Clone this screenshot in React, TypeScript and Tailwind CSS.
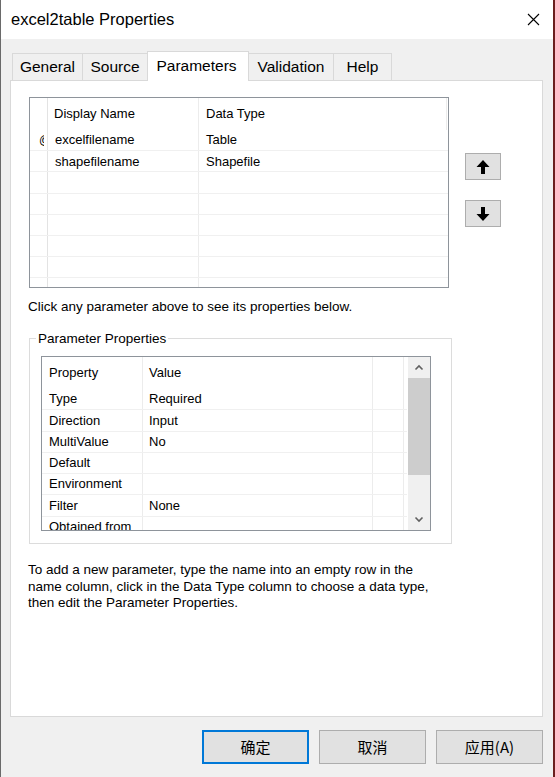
import React from 'react';

const ui = { fontFamily: '"Liberation Sans", Arial, sans-serif' };
const cjk = { fontFamily: '"Noto Sans CJK SC", "Liberation Sans", sans-serif' };

const tabs = [
  { label: 'General', w: 'w-[71px]' },
  { label: 'Source', w: 'w-[66px]' },
  { label: 'Parameters', w: 'w-[102px]', active: true },
  { label: 'Validation', w: 'w-[86px]' },
  { label: 'Help', w: 'w-[59px]' },
];

const params = [
  { name: 'excelfilename', type: 'Table', mark: true },
  { name: 'shapefilename', type: 'Shapefile' },
  { name: '', type: '' },
  { name: '', type: '' },
  { name: '', type: '' },
  { name: '', type: '' },
  { name: '', type: '' },
  { name: '', type: '' },
];

const props = [
  ['Type', 'Required'],
  ['Direction', 'Input'],
  ['MultiValue', 'No'],
  ['Default', ''],
  ['Environment', ''],
  ['Filter', 'None'],
  ['Obtained from', ''],
];

function ArrowButton({ down }: { down?: boolean }) {
  return (
    <button className="w-[36px] h-[27px] bg-[#e1e1e1] border border-[#adadad] flex items-center justify-center">
      <svg width="14" height="16" viewBox="0 0 14 16" className={down ? 'rotate-180' : ''}>
        <polygon points="7,1 13.5,8 9,8 9,15 5,15 5,8 0.5,8" fill="#000" />
      </svg>
    </button>
  );
}

function Chevron({ down }: { down?: boolean }) {
  return (
    <svg width="10" height="7" viewBox="0 0 10 7">
      <polyline
        points={down ? '1.5,1.5 5,5 8.5,1.5' : '1.5,5.5 5,2 8.5,5.5'}
        fill="none"
        stroke="#606060"
        strokeWidth="1.6"
      />
    </svg>
  );
}

function ParamGrid() {
  return (
    <div className="w-[420px] h-[191px] border border-[#8e949b] bg-white overflow-hidden text-[13px] text-black">
      <div className="flex h-[32px]">
        <div className="w-[18px] border-r border-[#e3e3e3]" />
        <div className="w-[151px] border-r border-[#ececec] pl-[6px] flex items-center">Display Name</div>
        <div className="w-[248px] border-r border-[#ececec] pl-[7px] flex items-center">Data Type</div>
      </div>
      {params.map((p, i) => (
        <div key={i} className="flex h-[21.2px] border-b border-[#f0f0f0]">
          <div className="w-[18px] border-r border-[#e3e3e3] flex items-center pl-[9px]">
            {p.mark && <span className="block w-[5px] overflow-hidden text-[12px] leading-none">@</span>}
          </div>
          <div className="w-[151px] border-r border-[#ececec] pl-[7px] flex items-center">{p.name}</div>
          <div className="w-[248px] pl-[7px] flex items-center">{p.type}</div>
        </div>
      ))}
    </div>
  );
}

function PropGrid() {
  return (
    <div className="w-[390px] h-[175px] border border-[#8e949b] bg-white flex overflow-hidden text-[13px] text-black">
      <div className="w-[365px]">
        <div className="flex h-[32px]">
          <div className="w-[101px] border-r border-[#ececec] pl-[7px] flex items-center">Property</div>
          <div className="w-[230px] border-r border-[#ececec] pl-[6px] flex items-center">Value</div>
          <div className="w-[31px] border-r border-[#ececec]" />
        </div>
        {props.map(([k, v]) => (
          <div key={k} className="flex h-[21.25px] border-b border-[#f0f0f0]">
            <div className="w-[101px] border-r border-[#ececec] pl-[7px] flex items-center whitespace-nowrap">{k}</div>
            <div className="w-[230px] border-r border-[#ececec] pl-[6px] flex items-center">{v}</div>
            <div className="w-[31px] border-r border-[#ececec]" />
          </div>
        ))}
      </div>
      {/* vertical scrollbar */}
      <div className="w-[22px] ml-[1px] bg-[#f0f0f0] flex flex-col">
        <div className="h-[21px] flex items-center justify-center">
          <Chevron />
        </div>
        <div className="h-[97px] bg-[#cdcdcd]" />
        <div className="flex-1 flex items-end justify-center pb-[7px]">
          <Chevron down />
        </div>
      </div>
    </div>
  );
}

export default function App() {
  return (
    <div
      className="w-[555px] h-[777px] bg-[#f0f0f0] border-l border-[#6a6a6a] border-r-2 border-r-[#6b1e1e] flex flex-col"
      style={ui}
    >
      {/* title bar */}
      <div className="h-[39px] bg-white flex items-center justify-between pl-[10px] pr-[13px]">
        <span className="text-[16.5px] text-black">excel2table Properties</span>
        <svg width="13" height="13" viewBox="0 0 13 13">
          <path d="M1 1 L12 12 M12 1 L1 12" stroke="#000" strokeWidth="1.1" />
        </svg>
      </div>

      {/* tab strip */}
      <div className="h-[41px] flex items-end pl-[11px]">
        {tabs.map((t, i) =>
          t.active ? (
            <div
              key={t.label}
              className={`${t.w} h-[30px] -ml-px -mb-px relative z-10 bg-white border border-b-0 border-[#d9d9d9] flex items-center justify-center pb-[2px] pr-[3px] text-[15.5px] text-black`}
            >
              {t.label}
            </div>
          ) : (
            <div
              key={t.label}
              className={`${t.w} h-[27px] ${i > 0 ? '-ml-px' : ''} bg-[#f0f0f0] border border-b-0 border-[#d9d9d9] flex items-center justify-center text-[15.5px] text-black`}
            >
              {t.label}
            </div>
          )
        )}
      </div>

      {/* tab page */}
      <div className="ml-[9px] w-[533px] h-[637px] bg-white border border-[#d9d9d9] pl-[18px] pt-[16px] flex flex-col">
        <div className="flex">
          <ParamGrid />
          <div className="ml-[16px] pt-[56px] flex flex-col gap-[20px]">
            <ArrowButton />
            <ArrowButton down />
          </div>
        </div>

        <p className="mt-[10px] -ml-px text-[13.5px] leading-[17px] text-black">
          Click any parameter above to see its properties below.
        </p>

        {/* Parameter Properties group */}
        <div className="relative mt-[23px] w-[423px] h-[206px] border border-[#dcdcdc] pl-[11px] pt-[17px]">
          <span className="absolute left-[6px] -top-[9px] bg-white px-[2px] text-[13.5px] leading-[17px] text-black">
            Parameter Properties
          </span>
          <PropGrid />
        </div>

        <p className="mt-[18px] -ml-px text-[13.5px] leading-[16.5px] text-black">
          To add a new parameter, type the name into an empty row in the
          <br />
          name column, click in the Data Type column to choose a data type,
          <br />
          then edit the Parameter Properties.
        </p>
      </div>

      {/* dialog buttons */}
      <div className="mt-[13px] flex justify-end gap-[10px] pr-[10px]">
        <button className="w-[107px] h-[34px] bg-[#e1e1e1] border-2 border-[#0078d7] text-[15px] text-black" style={cjk}>
          确定
        </button>
        <button className="w-[107px] h-[34px] bg-[#e1e1e1] border border-[#adadad] text-[15px] text-black" style={cjk}>
          取消
        </button>
        <button className="w-[107px] h-[34px] bg-[#e1e1e1] border border-[#adadad] text-[15px] text-black" style={cjk}>
          应用(A)
        </button>
      </div>
    </div>
  );
}
